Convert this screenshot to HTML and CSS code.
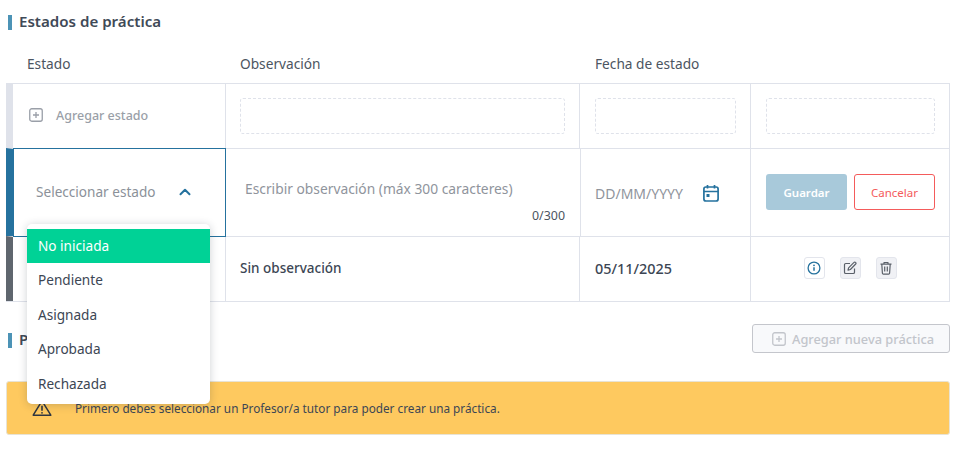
FILE: index.html
```html
<!DOCTYPE html>
<html lang="es">
<head>
<meta charset="utf-8">
<title>Estados de práctica</title>
<link rel="stylesheet" href="styles.css">
</head>
<body>
<main class="page">
  <h2 class="section-title title-first">Estados de práctica</h2>
  <div class="table-head">
    <div class="head-cell head-state">Estado</div>
    <div class="head-cell">Observación</div>
    <div class="head-cell">Fecha de estado</div>
    <div class="head-cell"></div>
  </div>
  <div class="table">
    <div class="row row-add">
      <div class="cell cell-state add-state">
        <svg class="add-icon" viewBox="0 0 14 14" width="14" height="14"><rect x="0.75" y="0.75" width="12.5" height="12.5" rx="2" fill="none" stroke="currentColor" stroke-width="1.3"/><path d="M7 4v6M4 7h6" stroke="currentColor" stroke-width="1.3" fill="none"/></svg>
        <span>Agregar estado</span>
      </div>
      <div class="cell"><div class="ghost"></div></div>
      <div class="cell cell-date-ghost"><div class="ghost"></div></div>
      <div class="cell cell-date-ghost"><div class="ghost"></div></div>
    </div>
    <div class="row row-edit">
      <div class="cell cell-state select-cell">
        <span class="select-label">Seleccionar estado</span>
        <svg class="chevron" viewBox="0 0 12 8" width="12" height="8"><path d="M1.5 6.2 6 1.8l4.5 4.4" fill="none" stroke="currentColor" stroke-width="2" stroke-linecap="round" stroke-linejoin="round"/></svg>
        <ul class="menu">
          <li class="menu-item menu-active">No iniciada</li>
          <li class="menu-item">Pendiente</li>
          <li class="menu-item">Asignada</li>
          <li class="menu-item">Aprobada</li>
          <li class="menu-item">Rechazada</li>
        </ul>
      </div>
      <div class="cell obs-cell">
        <span class="placeholder">Escribir observación (máx 300 caracteres)</span>
        <span class="counter">0/300</span>
      </div>
      <div class="cell date-cell">
        <span class="placeholder">DD/MM/YYYY</span>
        <svg class="calendar" viewBox="0 0 18 18" width="18" height="18"><rect x="1.9" y="3" width="14.2" height="14" rx="2" fill="none" stroke="currentColor" stroke-width="1.7"/><path d="M1.9 7.5h14.2M5.5 1v3.5M12.5 1v3.5" stroke="currentColor" stroke-width="1.7" fill="none"/><rect x="4.5" y="10" width="3" height="3" fill="currentColor"/></svg>
      </div>
      <div class="cell actions-edit">
        <button class="btn btn-save" type="button">Guardar</button>
        <button class="btn btn-cancel" type="button">Cancelar</button>
      </div>
    </div>
    <div class="row row-data">
      <div class="cell cell-state"></div>
      <div class="cell data-text">Sin observación</div>
      <div class="cell data-text data-date">05/11/2025</div>
      <div class="cell actions-row">
        <span class="icon-btn icon-info"><svg viewBox="0 0 14 14" width="14" height="14"><circle cx="7" cy="7" r="5.9" fill="none" stroke="currentColor" stroke-width="1.3"/><path d="M7 6.3v3.5" stroke="currentColor" stroke-width="1.5" fill="none"/><circle cx="7" cy="4.3" r="0.9" fill="currentColor"/></svg></span>
        <span class="icon-btn"><svg viewBox="0 0 14 14" width="14" height="14"><path d="M7 2.5H2.8A1.3 1.3 0 0 0 1.5 3.8v7.4a1.3 1.3 0 0 0 1.3 1.3h7.4a1.3 1.3 0 0 0 1.3-1.3V7.5" fill="none" stroke="currentColor" stroke-width="1.2"/><path d="M5 9.2l.6-2.4L11 1.4a1 1 0 0 1 1.5 0l.2.2a1 1 0 0 1 0 1.4L7.4 8.5z" fill="none" stroke="currentColor" stroke-width="1.2" stroke-linejoin="round"/></svg></span>
        <span class="icon-btn"><svg viewBox="0 0 14 14" width="14" height="14"><path d="M1.5 3.2h11M5 3V1.5h4V3M2.8 3.2l.6 9a1 1 0 0 0 1 .9h5.2a1 1 0 0 0 1-.9l.6-9M5.7 5.5v5M8.3 5.5v5" fill="none" stroke="currentColor" stroke-width="1.2" stroke-linejoin="round"/></svg></span>
      </div>
    </div>
  </div>
  <div class="section-row">
    <h2 class="section-title">Prácticas</h2>
    <button class="btn-new" type="button">
      <svg viewBox="0 0 14 14" width="14" height="14"><rect x="0.75" y="0.75" width="12.5" height="12.5" rx="2" fill="none" stroke="currentColor" stroke-width="1.3"/><path d="M7 4v6M4 7h6" stroke="currentColor" stroke-width="1.3" fill="none"/></svg>
      Agregar nueva práctica
    </button>
  </div>
  <div class="alert">
    <svg class="alert-icon" viewBox="0 0 20 18" width="20" height="18"><path d="M10 1.8 1.2 16.2h17.6z" fill="none" stroke="currentColor" stroke-width="1.5" stroke-linejoin="round"/><path d="M10 6.8v5" stroke="currentColor" stroke-width="1.6" fill="none"/><circle cx="10" cy="13.8" r="0.9" fill="currentColor"/></svg>
    <span>Primero debes seleccionar un Profesor/a tutor para poder crear una práctica.</span>
  </div>
</main>
</body>
</html>
```
FILE: styles.css
```css
* { box-sizing: border-box; }
html, body { margin: 0; padding: 0; background: #fff; }
body { font-family: "Noto Sans", "Open Sans", sans-serif; color: #3c4654; font-size: 13px; overflow: hidden; height: 457px; }
.page { width: 944px; margin-left: 6px; padding-top: 13px; }

.section-title { position: relative; margin: 0; padding-left: 13px; font-size: 15.1px; line-height: 16px; font-weight: 600; color: #3f4a57; }
.section-title::before { content: ""; position: absolute; left: 2px; top: 2px; width: 4px; height: 15px; background: #4c93b6; }

.table-head { display: grid; grid-template-columns: 219px 355px 170px 200px; margin-top: 26px; height: 28px; }
.head-cell { padding-left: 15px; font-size: 13.7px; line-height: 17px; color: #4c5561; }
.head-state { padding-left: 21px; }

.table { border-bottom: 1px solid #dfe2ea; }
.row { display: grid; border-top: 1px solid #dfe2ea; }
.row-add { height: 65px; border-left: 7px solid #dfe2ea; grid-template-columns: 213px 354px 171px 199px; }
.row-edit { height: 88px; border-left: 7px solid #25729e; grid-template-columns: 213px 355px 170px 199px; }
.row-data { height: 65px; border-left: 7px solid #5f666e; grid-template-columns: 213px 354px 171px 199px; }

.cell { border-right: 1px solid #dfe2ea; padding: 14px 14px; min-width: 0; }
.cell-date-ghost { padding-left: 15px; }
.ghost { height: 36px; border: 1px dashed #dfe2ea; border-radius: 3px; }

.add-state { display: flex; align-items: center; gap: 13px; padding: 0 0 2px 16px; color: #9a9fa8; font-size: 12.5px; font-weight: 500; }
.add-icon { flex: none; }

.select-cell { position: relative; display: flex; align-items: center; padding: 0 0 2px 22px; border: 1px solid #25729e; margin-top: -1px; height: 89px; }
.select-label { color: #8b9199; font-size: 13.6px; }
.chevron { color: #25729e; margin-left: 23px; }
.menu { position: absolute; left: 13px; top: 75px; width: 183px; margin: 0; padding: 4.6px 0 0; list-style: none; height: 180px; background: #fff; border-radius: 5px; box-shadow: 0 1px 8px rgba(30, 40, 60, .22); z-index: 5; }
.menu-item { height: 34.5px; line-height: 34px; padding-left: 11px; font-size: 13.6px; color: #3c4654; }
.menu-active { background: #00d296; color: #fff; }

.obs-cell { position: relative; padding: 30px 0 0 19px; }
.placeholder { color: #8f949c; font-size: 13.8px; }
.counter { position: absolute; right: 15px; bottom: 13px; font-size: 12.4px; color: #4c5561; }
.date-cell { display: flex; align-items: center; gap: 19px; padding: 0 0 0 14px; }
.date-cell .placeholder { font-size: 14px; }
.calendar { color: #25729e; flex: none; }
.actions-edit { display: flex; align-items: center; gap: 7px; padding: 0 0 2px 15px; }
.btn { height: 36px; border-radius: 3px; font: inherit; font-size: 11.5px; }
.btn-save { width: 81px; background: #a8c9da; color: #fff; border: 0; font-weight: 600; }
.btn-cancel { width: 81px; background: #fff; color: #f45b5b; border: 1px solid #f45b5b; }

.data-text { display: flex; align-items: center; padding: 0 0 2px 14px; font-size: 13.5px; font-weight: 500; color: #3c4654; }
.data-date { padding-left: 15px; font-size: 14.4px; }
.actions-row { display: flex; align-items: center; justify-content: center; gap: 15px; padding: 0 0 2px; }
.icon-btn { width: 21px; height: 22px; display: flex; align-items: center; justify-content: center; border: 1px solid #e3e5ec; border-radius: 3px; background: #f0f1f5; color: #5a6069; }
.icon-info { background: #fff; color: #25729e; }

.section-row { display: flex; justify-content: space-between; align-items: center; height: 29px; margin-top: 22px; }
.btn-new { display: flex; align-items: center; gap: 6px; width: 198px; height: 29px; padding: 0 0 0 19px; border: 1px solid #c4c6cc; border-radius: 3px; background: #f8f9fb; color: #c2c5cb; font: inherit; font-size: 12.8px; font-weight: 500; }

.alert { display: flex; align-items: center; height: 54px; margin-top: 28px; padding-left: 25px; gap: 23px; background: #fec95f; border: 1px solid #e8e3d4; border-radius: 3px; font-size: 11.75px; color: #3c4654; }
.alert-icon { color: #2f3640; flex: none; }
```
